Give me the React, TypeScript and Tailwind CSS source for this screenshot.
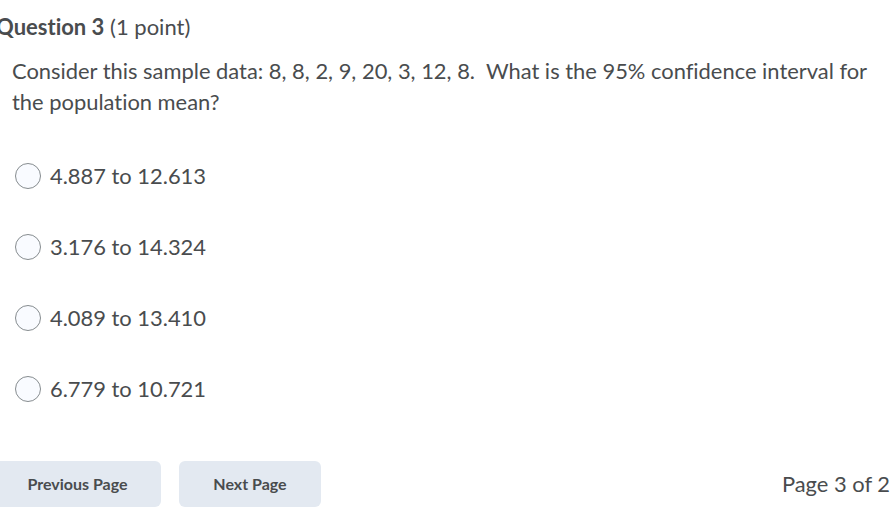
const options = ["4.887 to 12.613", "3.176 to 14.324", "4.089 to 13.410", "6.779 to 10.721"];

export default function App() {
  return (
    <div className="w-[891px] h-[516px] overflow-hidden bg-white text-[#494c4e] font-['Lato',sans-serif] [font-variant-ligatures:none]">
      <div className="-ml-[4px] pt-[13px]">
        <h2 className="text-[22px] leading-[28px]">
          <span className="font-bold">Question 3</span> <span>(1 point)</span>
        </h2>
      </div>
      <p className="pl-[12px] pr-[10px] mt-[14px] text-[21.9px] leading-[31px]">
        Consider this sample data: 8, 8, 2, 9, 20, 3, 12, 8.&nbsp; What is the 95% confidence interval for the population mean?
      </p>
      <div className="pl-[15px] mt-[46px] flex flex-col gap-[45px]">
        {options.map((o) => (
          <label key={o} className="flex items-center gap-[9px] h-[26px]">
            <span className="w-[26px] h-[26px] rounded-full border border-[#868c8f] bg-[#f9fbff]" />
            <span className="text-[21.9px]">{o}</span>
          </label>
        ))}
      </div>
      <div className="mt-[59px] flex items-center">
        <button className="-ml-[6px] w-[167px] h-[46px] rounded-[6px] bg-[#e3e9f1] text-[16px] font-bold">Previous Page</button>
        <button className="ml-[18px] w-[142px] h-[46px] rounded-[6px] bg-[#e3e9f1] text-[16px] font-bold">Next Page</button>
        <span className="ml-auto mr-[1px] text-[21.9px]">Page 3 of 2</span>
      </div>
    </div>
  );
}
